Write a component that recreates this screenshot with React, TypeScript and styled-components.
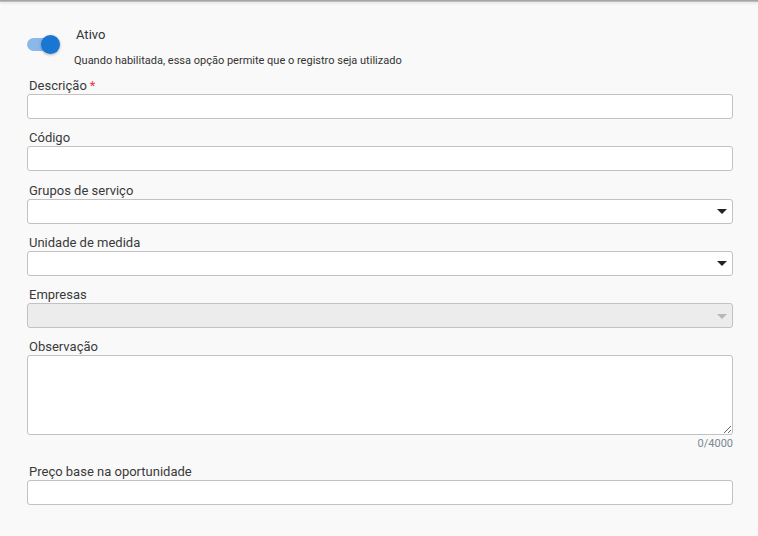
import React from "react";
import styled, { createGlobalStyle, css } from "styled-components";

const Global = createGlobalStyle`
  html, body { margin: 0; padding: 0; background: #f9f9f9; }
  body { font-family: Roboto, "Noto Sans", Arial, sans-serif; color: #333; }
  * { box-sizing: border-box; }
`;

const Page = styled.div`
  min-height: 536px;
  background: #f9f9f9;
  display: flex;
  flex-direction: column;
`;

const TopEdge = styled.div`
  height: 2px;
  background: linear-gradient(#9a9a9a, #c8c8c8);
  box-shadow: 0 1px 3px rgba(0, 0, 0, 0.12);
`;

const Form = styled.div`
  padding: 24px 25px 0 27px;
  display: flex;
  flex-direction: column;
  gap: 11.25px;
`;

const SwitchRow = styled.div`
  display: flex;
  align-items: flex-start;
  padding-top: 1px;
  margin-bottom: -1.25px;
`;

const SwitchBox = styled.div`
  width: 47px;
  height: 34px;
  display: flex;
  align-items: center;
  padding-top: 1px;
`;

const Track = styled.div`
  position: relative;
  width: 30px;
  height: 13px;
  border-radius: 7px;
  background: #8bb8ea;
`;

const Knob = styled.div`
  position: absolute;
  left: 14px;
  top: -3px;
  width: 19px;
  height: 19px;
  border-radius: 50%;
  background: #1976d2;
  box-shadow: 0 1px 3px rgba(0, 0, 0, 0.3);
`;

const SwitchText = styled.div`
  display: flex;
  flex-direction: column;
  gap: 11px;
`;

const SwitchTitle = styled.div`
  font-size: 13px;
  line-height: 16px;
  padding-left: 2px;
  color: #333;
`;

const Helper = styled.div`
  font-size: 11px;
  line-height: 14px;
  color: #333;
`;

const Field = styled.div`
  display: flex;
  flex-direction: column;
`;

const Label = styled.label`
  font-size: 13px;
  line-height: 16px;
  padding-left: 2px;
  color: #3a3a3a;
`;

const Req = styled.span`
  color: #e53935;
  margin-left: 3px;
`;

const boxBase = css`
  width: 100%;
  border: 1px solid #c2c2c2;
  border-radius: 3px;
  background: #fff;
  font-family: inherit;
  font-size: 13px;
  outline: none;
`;

const Input = styled.input`
  ${boxBase};
  height: 25px;
  padding: 0 8px;
`;

const SelectBox = styled.div<{ $disabled?: boolean }>`
  ${boxBase};
  height: 25px;
  display: flex;
  align-items: center;
  justify-content: flex-end;
  padding-right: 4px;
  background: ${(p) => (p.$disabled ? "#ececec" : "#fff")};
`;

const Arrow = styled.span<{ $disabled?: boolean }>`
  width: 0;
  height: 0;
  border-left: 5px solid transparent;
  border-right: 5px solid transparent;
  border-top: 5px solid ${(p) => (p.$disabled ? "#b8b8b8" : "#222")};
  margin-right: 1px;
  margin-top: 1px;
`;

const TextArea = styled.textarea`
  ${boxBase};
  height: 80px;
  display: block;
  resize: vertical;
  padding: 6px 8px;
`;

const Counter = styled.div`
  font-size: 11px;
  line-height: 14px;
  text-align: right;
  color: #7b8794;
  margin-top: 2px;
  margin-bottom: 1px;
`;

function Select({ label, disabled }: { label: string; disabled?: boolean }) {
  return (
    <Field>
      <Label>{label}</Label>
      <SelectBox $disabled={disabled}>
        <Arrow $disabled={disabled} />
      </SelectBox>
    </Field>
  );
}

export default function App() {
  return (
    <Page>
      <Global />
      <TopEdge />
      <Form>
        <SwitchRow>
          <SwitchBox>
            <Track>
              <Knob />
            </Track>
          </SwitchBox>
          <SwitchText>
            <SwitchTitle>Ativo</SwitchTitle>
            <Helper>Quando habilitada, essa opção permite que o registro seja utilizado</Helper>
          </SwitchText>
        </SwitchRow>
        <Field>
          <Label>
            Descrição<Req>*</Req>
          </Label>
          <Input />
        </Field>
        <Field>
          <Label>Código</Label>
          <Input />
        </Field>
        <Select label="Grupos de serviço" />
        <Select label="Unidade de medida" />
        <Select label="Empresas" disabled />
        <Field>
          <Label>Observação</Label>
          <TextArea />
          <Counter>0/4000</Counter>
        </Field>
        <Field>
          <Label>Preço base na oportunidade</Label>
          <Input />
        </Field>
      </Form>
    </Page>
  );
}
